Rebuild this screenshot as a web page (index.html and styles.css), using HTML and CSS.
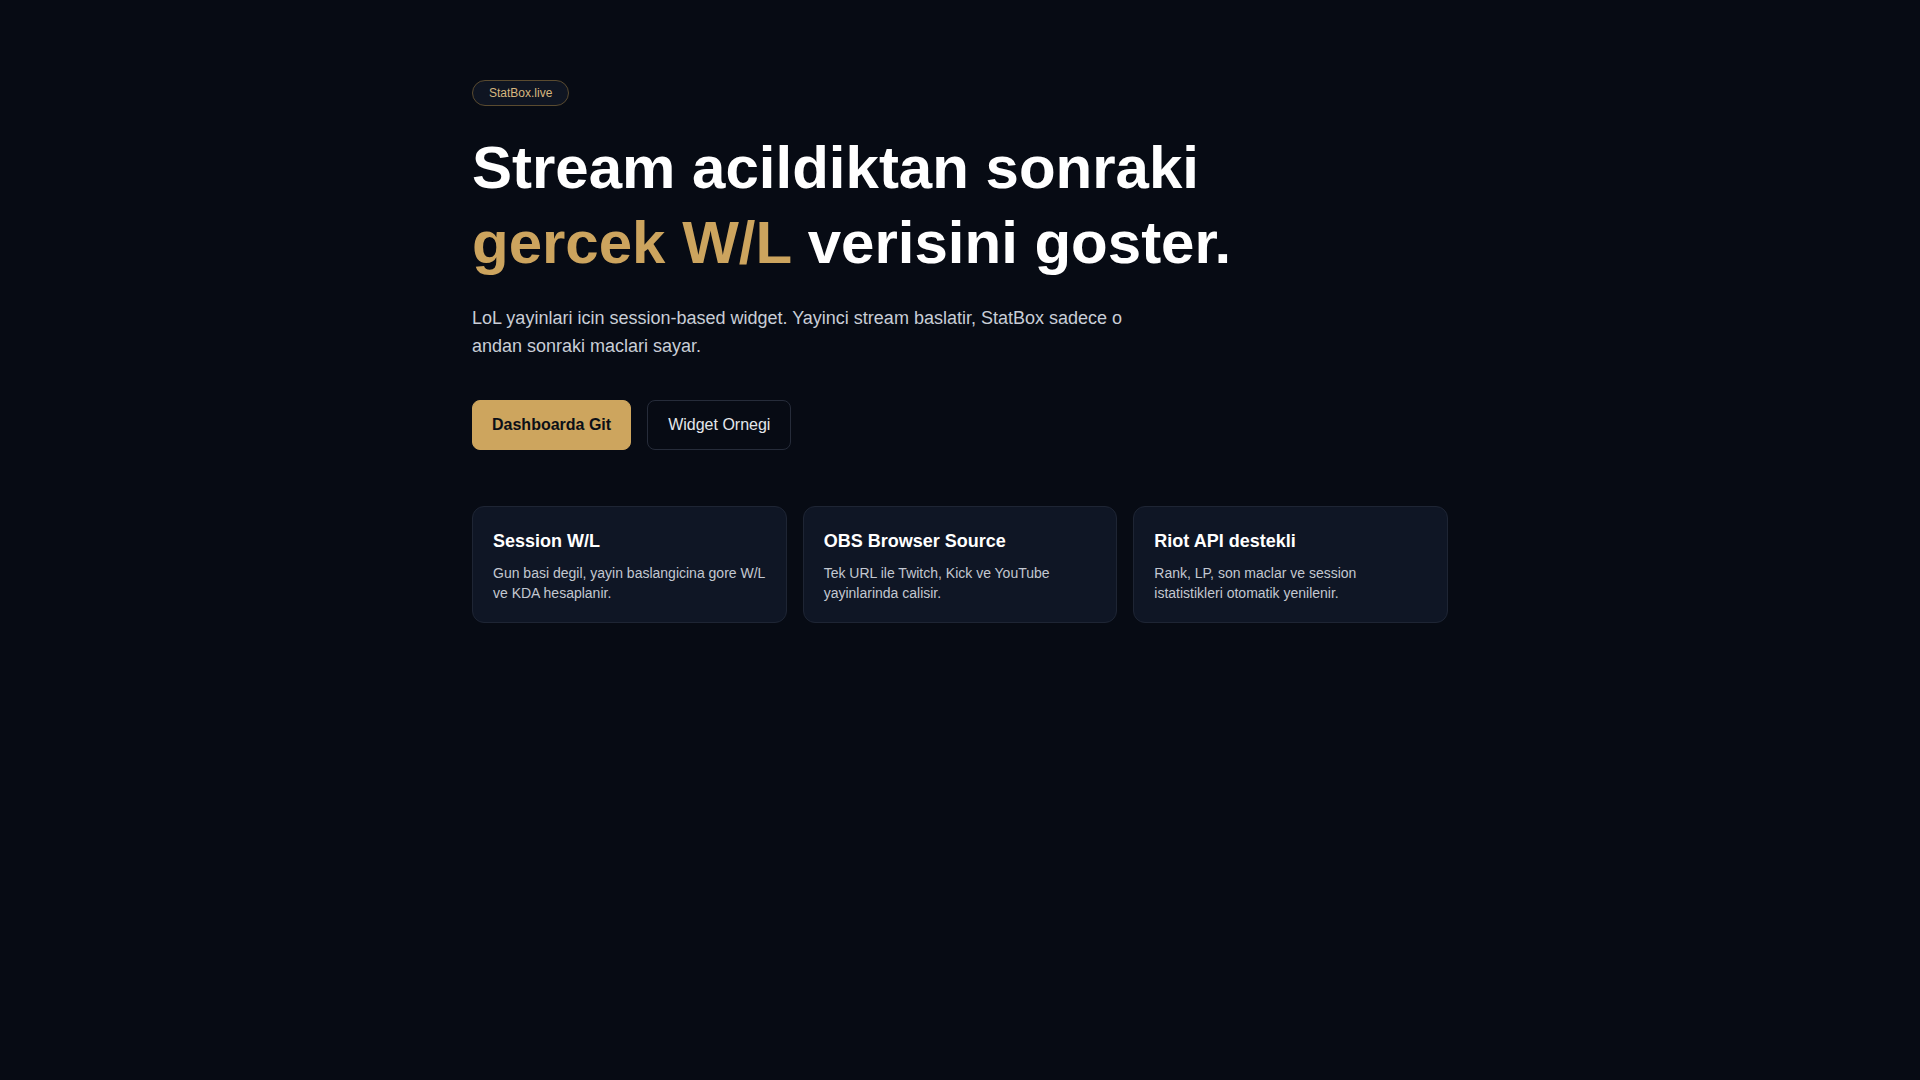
FILE: index.html
```html
<!DOCTYPE html>
<html lang="tr">
<head>
<meta charset="utf-8">
<title>StatBox.live</title>
<link rel="stylesheet" href="styles.css">
</head>
<body>
<main class="container">
  <div class="hero">
    <span class="pill">StatBox.live</span>
    <h1 class="title">Stream acildiktan sonraki<br><span class="accent">gercek W/L</span> verisini goster.</h1>
    <p class="lead">LoL yayinlari icin session-based widget. Yayinci stream baslatir, StatBox sadece o andan sonraki maclari sayar.</p>
    <div class="actions">
      <a class="btn btn-primary" href="#">Dashboarda Git</a>
      <a class="btn btn-outline" href="#">Widget Ornegi</a>
    </div>
  </div>
  <section class="features">
    <div class="card">
      <h3 class="card-title">Session W/L</h3>
      <p class="card-text">Gun basi degil, yayin baslangicina gore W/L ve KDA hesaplanir.</p>
    </div>
    <div class="card">
      <h3 class="card-title">OBS Browser Source</h3>
      <p class="card-text">Tek URL ile Twitch, Kick ve YouTube yayinlarinda calisir.</p>
    </div>
    <div class="card">
      <h3 class="card-title">Riot API destekli</h3>
      <p class="card-text">Rank, LP, son maclar ve session istatistikleri otomatik yenilenir.</p>
    </div>
  </section>
</main>
</body>
</html>
```
FILE: styles.css
```css
* { box-sizing: border-box; }
html, body {
  margin: 0;
  padding: 0;
  background: #070b14;
  color: #ffffff;
  font-family: "Liberation Sans", Arial, sans-serif;
}
body { min-height: 1080px; }
.container {
  width: 976px;
  margin: 0 auto;
  padding-top: 80px;
}
.hero {
  display: flex;
  flex-direction: column;
  align-items: flex-start;
}
.pill {
  display: inline-flex;
  align-items: center;
  height: 26px;
  padding: 0 16px;
  border: 1px solid #5a4b30;
  border-radius: 999px;
  background: #0f1522;
  color: #d6b77f;
  font-size: 12px;
  line-height: 14px;
}
.title {
  margin: 24px 0 0;
  font-size: 60px;
  line-height: 75px;
  font-weight: 700;
  color: #ffffff;
}
.accent { color: #cca45e; }
.lead {
  margin: 25px 0 0;
  max-width: 680px;
  font-size: 18px;
  line-height: 27.5px;
  color: #c9ced7;
}
.actions {
  display: flex;
  gap: 16px;
  margin-top: 40px;
}
.btn {
  display: inline-flex;
  align-items: center;
  height: 50px;
  padding: 0 20px;
  border-radius: 8px;
  border: 1px solid transparent;
  font-size: 16px;
  line-height: 18px;
  text-decoration: none;
}
.btn-primary {
  padding: 0 19px;
  background: #cda55e;
  border-color: #cda55e;
  color: #0b0f17;
  font-weight: 700;
}
.btn-outline {
  background: transparent;
  border-color: #262c3a;
  color: #e4e7ec;
}
.features {
  display: grid;
  grid-template-columns: repeat(3, 1fr);
  gap: 16px;
  margin-top: 55.5px;
}
.card {
  background: #0f1625;
  border: 1px solid #1e2534;
  border-radius: 12px;
  padding: 23px 19px 19px 20px;
}
.card-title {
  margin: 0;
  font-size: 18px;
  line-height: 23.4px;
  font-weight: 700;
  color: #ffffff;
}
.card-text {
  margin: 10px 0 0;
  font-size: 14px;
  line-height: 20px;
  color: #c3c8d1;
}
```
